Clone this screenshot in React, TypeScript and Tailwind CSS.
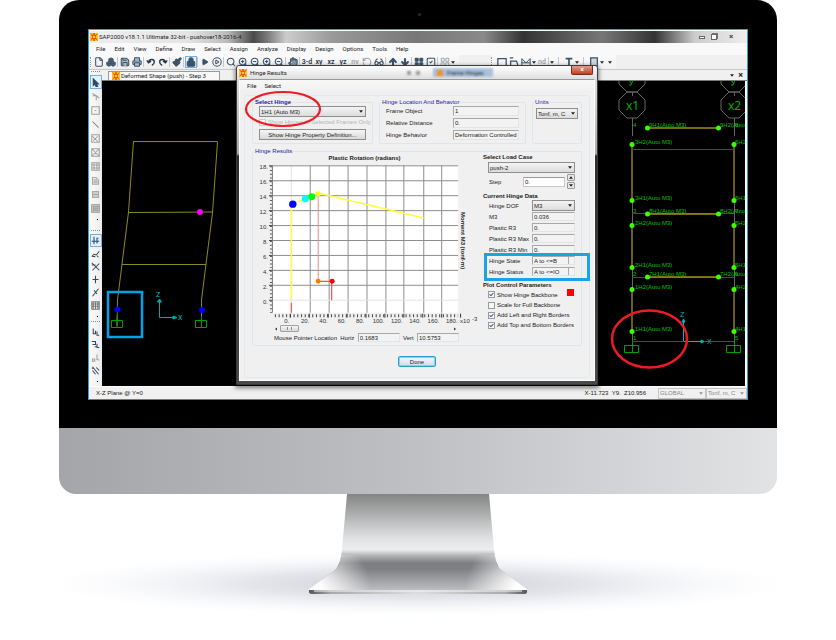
import type { ReactNode } from "react";
import clsx from "clsx";
import {
  ArrowDown,
  ArrowUp,
  Boxes,
  Check,
  CirclePlay,
  File,
  Glasses,
  Hand,
  LayoutGrid,
  Lock,
  Paintbrush,
  Play,
  Printer,
  RotateCcw,
  Save,
  Search,
  SquareCheck,
  ZoomIn,
  ZoomOut,
} from "lucide-react";

const MENUS = ["File", "Edit", "View", "Define", "Draw", "Select", "Assign", "Analyze", "Display", "Design", "Options", "Tools", "Help"];

const UI_FONT = "font-[Roboto,'Liberation_Sans',sans-serif]";
const DIALOG_FONT = "font-['Liberation_Sans',sans-serif]";

function Logo() {
  return (
    <svg viewBox="0 0 12 12" className="size-[8px] shrink-0">
      <rect width="12" height="12" fill="#ffc21a" />
      <path d="M0 0l5 4V0h2v4l5-4-4 6 4 6-5-4v4H5V8l-5 4 4-6z" fill="#e3341c" />
      <circle cx="6" cy="6" r="2" fill="#ffd21a" />
    </svg>
  );
}

function Caret() {
  return (
    <svg viewBox="0 0 6 4" className="h-[3px] w-[4px] shrink-0">
      <path d="M0 0h6L3 4z" fill="#222" />
    </svg>
  );
}

function Sep() {
  return <span className="h-[10px] w-[2px] shrink-0 border-l border-[#c4c8cc]" />;
}

function Tool({ label, active, children }: { label: string; active?: boolean; children: ReactNode }) {
  return (
    <button
      aria-label={label}
      className={clsx(
        "flex h-[12px] w-[12px] shrink-0 items-center justify-center text-[#3c5269] [&>svg]:size-[10px] [&>svg]:stroke-[2.5]",
        active && "border border-[#6db3ea] bg-[#e3f1fc]"
      )}
    >
      {children}
    </button>
  );
}

function TextTool({ children, dim }: { children: string; dim?: boolean }) {
  return (
    <button
      className={clsx(
        "w-[12px] shrink-0 text-center text-[7px] leading-[12px] font-medium",
        dim ? "text-[#9aa0a6]" : "text-[#223344]"
      )}
    >
      {children}
    </button>
  );
}

function Toolbar() {
  return (
    <div className="flex h-[14px] items-center overflow-hidden bg-[#f0f0f0]">
      <div className="flex h-full items-center bg-linear-to-b from-[#fafafa] to-[#eeeeee] pr-1">
        <span className="ml-px mr-[2px] h-[10px] border-l border-dotted border-[#999]" />
        <Tool label="New"><File /></Tool>
        <Tool label="Open"><Boxes fill="#5d7388" /></Tool>
        <Sep />
        <Tool label="Save"><Save fill="#a9b8c6" /></Tool>
        <Tool label="Print"><Printer fill="#a9b8c6" /></Tool>
        <Sep />
        <Tool label="Undo">
          <svg viewBox="0 0 12 12" fill="none" stroke="#26384a"><path d="M3 6c1-4 7-4 7 0 0 2-1 3-3 4M1 4l2 3 3-2" strokeWidth="1.6" /></svg>
        </Tool>
        <Tool label="Redo">
          <svg viewBox="0 0 12 12" fill="none" stroke="#26384a"><path d="M9 6c-1-4-7-4-7 0 0 2 1 3 3 4M11 4L9 7 6 5" strokeWidth="1.6" /></svg>
        </Tool>
        <Sep />
        <Tool label="Refresh"><Paintbrush fill="#3c5269" /></Tool>
        <Sep />
        <Tool label="Lock" active><Lock fill="#3c5269" /></Tool>
        <Sep />
        <Tool label="Run"><Play fill="#3c5269" className="scale-75" /></Tool>
        <Tool label="Animate"><CirclePlay /></Tool>
        <Sep />
        <Tool label="Rubber band zoom"><Search /></Tool>
        <Tool label="Full view"><ZoomIn /></Tool>
        <Tool label="Previous zoom"><ZoomOut /></Tool>
        <Tool label="Zoom in"><ZoomIn /></Tool>
        <Tool label="Zoom out"><ZoomOut /></Tool>
        <Sep />
        <Tool label="Pan"><Hand fill="#8796a5" /></Tool>
        <Sep />
        <TextTool>3-d</TextTool>
        <TextTool>xy</TextTool>
        <TextTool>xz</TextTool>
        <TextTool>yz</TextTool>
        <TextTool dim>nv</TextTool>
        <Tool label="Rotate"><RotateCcw color="#9aa0a6" /></Tool>
        <Tool label="Perspective"><Glasses /></Tool>
        <Sep />
        <Tool label="Up"><ArrowUp className="stroke-5!" /></Tool>
        <Tool label="Down"><ArrowDown className="stroke-5!" /></Tool>
        <Sep />
        <Tool label="Shrink"><LayoutGrid fill="#3c5269" /></Tool>
        <Tool label="Display options"><SquareCheck /></Tool>
        <Sep />
        <Tool label="Assign"><LayoutGrid color="#a5a9ad" /></Tool>
        <Caret />
      </div>
      <div className="ml-8 flex h-full items-center bg-linear-to-b from-[#fafafa] to-[#f2f2f2] pr-1">
        <span className="mr-1 h-[10px] border-l border-dotted border-[#999]" />
        <Tool label="Frame">
          <svg viewBox="0 0 12 12" fill="none" stroke="#3c5269"><path d="M1 11V2h10v9" strokeWidth="1.5" /></svg>
        </Tool>
        <Tool label="Deformed shape">
          <svg viewBox="0 0 12 12" fill="none" stroke="#3c5269"><path d="M1 1h4M2 11V5h7l2 6" strokeWidth="1.5" /></svg>
        </Tool>
        <Tool label="Forces">
          <svg viewBox="0 0 12 12" fill="none" stroke="#3c5269"><path d="M1 11V2l5 5 5-5v9M1 7h10" strokeWidth="1.2" /></svg>
        </Tool>
        <Caret />
        <TextTool dim>nd</TextTool>
        <Sep />
        <Caret />
        <span className="mx-1 h-[10px] border-l border-[#c4c8cc]" />
        <Tool label="Section">
          <svg viewBox="0 0 12 12" fill="none" stroke="#3c5269"><path d="M2 2h8M6 2v9M2 11h8" strokeWidth="2" /></svg>
        </Tool>
        <Caret />
        <span className="mx-1 h-[10px] border-l border-[#c4c8cc]" />
        <Tool label="Area">
          <svg viewBox="0 0 12 12" fill="#cdd8e2" stroke="#3c5269"><path d="M2 1h8v10H2z" strokeWidth="1.5" /></svg>
        </Tool>
        <Caret />
        <span className="w-1" />
        <Caret />
      </div>
    </div>
  );
}

const SIDE_TOOLS: { label: string; tone: string; d: string }[][] = [
  [
    { label: "Pointer", tone: "text-[#33475c]", d: "M3 1v9l2-2 2 4 2-1-2-3h3z" },
    { label: "Reshape", tone: "text-[#a0a0a0]", d: "M2 2l5 3v6M7 5l4 3M2 5h4" },
    { label: "Joint", tone: "text-[#a0a0a0]", d: "M1 1h10v10H1zM5 6h2" },
    { label: "Frame", tone: "text-[#777]", d: "M2 2l8 8" },
    { label: "Quick frame", tone: "text-[#a0a0a0]", d: "M1 1h10v10H1zM3 9l6-6M2 3l7 7" },
    { label: "Braces", tone: "text-[#a0a0a0]", d: "M1 1h10v10H1zM1 1l10 10M11 1L1 11" },
    { label: "Secondary beams", tone: "text-[#a0a0a0]", d: "M1 1h10v10H1zM4 1v10M8 1v10M1 4h10M1 8h10" },
    { label: "Poly area", tone: "text-[#a8a8a8]", d: "M2 2h5l3 4v5H2zM3 5h5M3 7h6M3 9h6" },
    { label: "Rectangular area", tone: "text-[#a8a8a8]", d: "M2 2h8v8H2zM2 4h8M2 6h8M2 8h8" },
    { label: "Quick area", tone: "text-[#909090]", d: "M1 1h10v10H1zM3 3h6v6H3zM5 5h2v2H5z" },
  ],
  [
    { label: "Snap points", tone: "text-[#33475c]", d: "M1 7h10M4 1v10M8 4v6M7 3h3" },
    { label: "Snap ends", tone: "text-[#33475c]", d: "M1 10l3-3 3 1 4-5M2 10h3v1M8 9l2 2" },
    { label: "Snap intersections", tone: "text-[#33475c]", d: "M1 1l10 10M11 2L2 11M1 4h5" },
    { label: "Snap perpendicular", tone: "text-[#33475c]", d: "M6 1v10M2 6h8" },
    { label: "Snap lines", tone: "text-[#33475c]", d: "M2 11l4-5M6 6l4-5M4 3l4 5" },
    { label: "Snap grid", tone: "text-[#777]", d: "M1 1h10v10H1zM3 1v10M6 1v10M9 1v10M1 4h10M1 7h10" },
  ],
  [
    { label: "Select all", tone: "text-[#33475c]", d: "M3 2v7h3V5M8 6v5h3" },
    { label: "Previous selection", tone: "text-[#33475c]", d: "M1 2h5v4H2M8 5v5h3M5 9h3" },
    { label: "Clear selection", tone: "text-[#a0a0a0]", d: "M2 8h3v3H2zM8 2v7h3" },
    { label: "Select by line", tone: "text-[#33475c]", d: "M2 1l8 10M2 6l4 5M7 2l4 4M1 3h2" },
  ],
];

function SideToolbar() {
  return (
    <div className="flex w-[13px] shrink-0 flex-col items-center bg-linear-to-r from-[#fbfbfb] to-[#ececec] pt-px">
      {SIDE_TOOLS.map((group, g) => (
        <div key={g} className={clsx("flex w-full flex-col items-center", g === 0 && "grow")}>
          <span className="mb-[3px] w-[9px] border-t border-dotted border-[#888]" />
          {group.map((tool, i) => (
            <button
              key={tool.label}
              aria-label={tool.label}
              className={clsx(
                "flex w-[12px] shrink-0 items-center justify-center",
                g === 0 ? "h-[14px]" : "h-[13px]",
                tool.tone,
                i === 0 && g < 2 && "border border-[#6db3ea] bg-[#e3f1fc]"
              )}
            >
              <svg viewBox="0 0 12 12" className="size-[9px] shrink-0" fill="none" stroke="currentColor" strokeWidth="1.4">
                <path d={tool.d} fill={tool.label === "Pointer" ? "currentColor" : "none"} />
              </svg>
            </button>
          ))}
          <span className="my-1 ml-1 size-px bg-black" />
        </div>
      ))}
    </div>
  );
}

function DeformedView() {
  return (
    <svg viewBox="102 81 134 305" className="h-[305px] w-[134px] shrink-0 font-[Roboto,sans-serif]">
      <g fill="none" stroke="#8a8a22">
        <path d="M133.500 141l-5 71-6.500 52-4.500 36-.5 26" />
        <path d="M217.500 142l-5 71-6.500 51-4.500 36v26" />
        <path d="M133 141.500h84.500M128.500 212.500l84-.5M122 264.500h84" />
      </g>
      <g fill="none" stroke="#00a000">
        <path d="M111.500 320.500h11v7h-11zM117 316v11M195.500 320.500h11v7h-11zM201.500 316v11" />
      </g>
      <circle cx="200" cy="212" r="3" fill="#ff00ff" />
      <circle cx="117.500" cy="309.500" r="3" fill="#0000ff" />
      <circle cx="202" cy="310" r="3" fill="#0000ff" />
      <g stroke="#00a8a8" fill="none">
        <path d="M159.500 300v17.500H175" />
        <path d="M157.500 302l2-3 2 3zM173 316l4 1.500-4 1.500z" fill="#00a8a8" />
      </g>
      <text x="156" y="297" fontSize="7" fill="#00c0c0">Z</text>
      <text x="178" y="320" fontSize="7" fill="#00c0c0">X</text>
      <rect x="108" y="292" width="34" height="45" fill="none" stroke="#00a2e8" strokeWidth="2.500" />
    </svg>
  );
}

const COLUMN_HINGES = [
  { y: 144, left: "3H2(Auto M3)", right: "6H2" },
  { y: 200, left: "3H1(Auto M3)", right: "6H1" },
  { y: 225, left: "2H2(Auto M3)", right: "5H2" },
  { y: 267, left: "2H1(Auto M3)", right: "5H1" },
  { y: 289, left: "1H2(Auto M3)", right: "4H2" },
  { y: 331, left: "1H1(Auto M3)", right: "4H1" },
];

const BEAM_HINGES = [
  { y: 128, name: "9", nodes: ["4", "8"] },
  { y: 214, name: "8", nodes: ["3", "7"] },
  { y: 277, name: "7", nodes: ["2", "6"] },
];

function HingeView() {
  return (
    <svg viewBox="597 81 148 305" className="h-[305px] w-[148px] shrink-0 font-['Liberation_Sans',sans-serif] text-[6px]">
      {[632, 734].map((x, i) => (
        <g key={x} fill="none" stroke="#666">
          <path d={`M${x - 5} 92h10l8 8v10l-8 8h-10l-8-8v-10z`} />
          <path d={`M${x - 13} 81v3l8 8h10l8-8v-3M${x + 0.5} 92v4M${x + 0.5} 118v18M${x + 0.5} 200v25M${x + 0.5} 267v22M${x + 0.5} 331v14`} />
          <path d={`M${x} 142v58M${x} 225v42M${x} 289v42`} stroke="#8a7d1c" strokeWidth="1.500" />
          <path d={`M${x - 7.5} 345.500h14v7h-14zM${x + 0.5} 341v12`} stroke="#00a000" />
          <path d={`M${x + 1} 80l-2 5h-2M${x - 3} 80l2 3`} stroke="#00b000" />
          <text x={x - 6} y="110" fontSize="12" fill="#00b000" stroke="none" className="font-['Noto_Sans',sans-serif]">
            {i === 0 ? "x1" : "x2"}
          </text>
        </g>
      ))}
      <path d="M632 149.500h102M632 213.500h102M632 277.500h102M632 341.500h102" stroke="#4a4a4a" />
      {BEAM_HINGES.map((b) => (
        <g key={b.name}>
          <path d={`M647 ${b.y}h71`} stroke="#a08f14" strokeWidth="1.500" />
          <circle cx="647.500" cy={b.y} r="2.500" fill="#3cff00" />
          <circle cx="718.500" cy={b.y} r="2.500" fill="#3cff00" />
          <g fill="#00c000">
            <text x="649" y={b.y - 1}>{b.name}H1(Auto M3)</text>
            <text x="720" y={b.y - 1}>{b.name}H2(Auto</text>
            <text x="633" y={b.y - 1}>{b.nodes[0]}</text>
            <text x="735" y={b.y - 1}>{b.nodes[1]}</text>
          </g>
        </g>
      ))}
      {COLUMN_HINGES.map((h) => (
        <g key={h.y}>
          <circle cx="632" cy={h.y + 0.5} r="2.500" fill="#3cff00" />
          <circle cx="734" cy={h.y + 0.5} r="2.500" fill="#3cff00" />
          <text x="635" y={h.y} fill="#00c000">{h.left}</text>
          <text x="735" y={h.y} fill="#00c000">{h.right}</text>
        </g>
      ))}
      <text x="633" y="340" fill="#00c000">1</text>
      <text x="735" y="340" fill="#00c000">5</text>
      <g stroke="#00b4c8" fill="none">
        <path d="M683.500 322v19M684 341.500h17" />
        <path d="M682 322l1.500-3 1.500 3zM701 340l3 1.500-3 1.500z" fill="#00b4c8" />
      </g>
      <text x="680" y="317" fontSize="7" fill="#00b4c8">Z</text>
      <text x="707" y="344" fontSize="7" fill="#00b4c8">X</text>
      <ellipse cx="649.500" cy="339" rx="37.500" ry="28.500" fill="none" stroke="#ed1c24" strokeWidth="2.500" />
    </svg>
  );
}

function Group({ title, className, bodyClass, children }: { title: string; className?: string; bodyClass?: string; children: ReactNode }) {
  return (
    <fieldset className={clsx("min-w-0 rounded-[2px] border border-[#dde6ea]", className)}>
      <legend className="ml-px px-px leading-[6px] text-[#1c1ca8]">{title}</legend>
      <div className={bodyClass}>{children}</div>
    </fieldset>
  );
}

function Select({ id, label, value, className }: { id?: string; label?: string; value: string; className?: string }) {
  return (
    <span className={clsx("relative flex", className)}>
      <select
        id={id}
        aria-label={label}
        className="h-[11px] w-full appearance-none border border-[#8e8e8e] bg-linear-to-b from-[#f4f4f4] to-[#dcdcdc] pl-px text-[#222]"
      >
        <option>{value}</option>
      </select>
      <span className="pointer-events-none absolute top-[4px] right-[3px] flex"><Caret /></span>
    </span>
  );
}

function Field({ id, label, value, className }: { id: string; label: string; value: string; className?: string }) {
  return (
    <>
      <label htmlFor={id}>{label}</label>
      <input
        id={id}
        readOnly
        defaultValue={value}
        className={clsx("min-w-0 border-t border-l border-[#a8a8a8] border-r-[#e4e4e4] border-b-[#e4e4e4] border-r border-b bg-[#f3f3f3] pl-px text-[#222]", className)}
      />
    </>
  );
}

function CheckRow({ id, label, checked, disabled }: { id: string; label: string; checked?: boolean; disabled?: boolean }) {
  return (
    <span className={clsx("flex h-[10px] items-center gap-[2px] whitespace-nowrap", disabled && "text-[#b4b4b4]")}>
      <span className="relative flex">
        <input
          id={id}
          type="checkbox"
          defaultChecked={checked}
          disabled={disabled}
          className="size-[7px] appearance-none border border-[#9a9a9a] bg-[#f6f6f6] disabled:border-[#ccc]"
        />
        {checked && <Check className="pointer-events-none absolute top-px left-px size-[5px] stroke-5 text-[#3b4a94]" />}
      </span>
      <label htmlFor={id}>{label}</label>
    </span>
  );
}

function HingeChart() {
  const yLabels = [18, 16, 14, 12, 10, 8, 6, 4, 2, 0];
  const xLabels = [0, 20, 40, 60, 80, 100, 120, 140, 160, 180];
  return (
    <svg viewBox="254 154 228 170" className="h-[170px] w-full text-[6px]" fill="#333">
      <text x="365" y="160" textAnchor="middle" fontWeight="bold" fill="#222">Plastic Rotation  (radians)</text>
      <rect x="272" y="165" width="187" height="148" fill="#fff" />
      <path d="M291.500 165v148" stroke="#e4e4e4" />
      <path
        d="M310.500 165v148M329.500 165v148M348.500 165v148M367.500 165v148M386.500 165v148M404.500 165v148M424.500 165v148M442.500 165v148M272 165.500h187M272 180.500h187M272 195.500h187M272 210.500h187M272 225.500h187M272 240.500h187M272 255.500h187M272 270.500h187M272 285.500h187"
        stroke="#8c8c8c"
        fill="none"
      />
      <path d="M272 300.500h187" stroke="#e4e4e4" />
      <path d="M272.500 165v148" stroke="#777" />
      <path d="M271 166v147" stroke="#555" strokeWidth="2" strokeDasharray="1 2.750" />
      <path d="M275 316h184" stroke="#444" strokeWidth="3" strokeDasharray="1 2.750" />
      {yLabels.map((n, i) => (
        <g key={n}>
          <text x="268" y={169 + i * 15} textAnchor="end">{n}.</text>
          <path d={`M269 ${165.5 + i * 15}h3`} stroke="#444" />
        </g>
      ))}
      {xLabels.map((n, i) => (
        <g key={n}>
          <text x={287 + i * 18.4} y="323" textAnchor="middle">{n}.</text>
          <path d={`M${290.5 + i * 19} 314v4`} stroke="#333" />
        </g>
      ))}
      <text x="461" y="323">x10</text>
      <text x="473" y="321">-3</text>
      <text transform="translate(462 212) rotate(90)" fontWeight="bold" fill="#222">Moment M3  (tonf·m)</text>
      <path d="M291.500 300v-96l28-11 105 25" fill="none" stroke="#ffff3c" strokeWidth="1.500" />
      <path d="M318.500 194v88" stroke="#f08a8a" />
      <path d="M318.500 281.500H332v19M291.500 303v10" stroke="#f05050" fill="none" strokeWidth="1.200" />
      <circle cx="291" cy="205" r="1.500" fill="#ff00ff" />
      <circle cx="293" cy="204" r="3.700" fill="#0000ff" />
      <circle cx="305.500" cy="198.500" r="3.500" fill="#00ffff" />
      <circle cx="312" cy="196.500" r="3.500" fill="#00ff00" />
      <circle cx="318.500" cy="193.500" r="2.500" fill="#ffff00" />
      <circle cx="318.500" cy="281.500" r="2.500" fill="#ff8000" />
      <circle cx="332.500" cy="281.500" r="2.500" fill="#ff0000" />
    </svg>
  );
}

function HingeResults() {
  return (
    <Group title="Hinge Results" bodyClass="flex justify-between pr-[6px] pb-[3px]">
      <div className="flex w-[228px] flex-col pl-px">
        <HingeChart />
        <div className="mr-[22px] ml-[18px] flex h-[9px] items-center justify-between px-[3px]">
          <span className="flex items-center gap-[3px]">
            <svg viewBox="0 0 4 6" className="h-[4px] w-[2px]"><path d="M4 0v6L0 3z" fill="#333" /></svg>
            <span className="flex h-[7px] w-[19px] items-center justify-center rounded-[1px] border border-[#a0a0a0] bg-linear-to-b from-[#f6f6f6] to-[#d8d8d8]">
              <span className="h-[3px] w-[5px] border-x border-[#888]" />
            </span>
          </span>
          <svg viewBox="0 0 4 6" className="h-[4px] w-[2px]"><path d="M0 0v6l4-3z" fill="#333" /></svg>
        </div>
        <div className="mr-[22px] ml-[20px] flex items-center justify-between">
          <span>Mouse Pointer Location</span>
          <Field id="horiz" label="Horiz" value="0.1683" className="h-[9px] w-[42px]" />
          <Field id="vert" label="Vert" value="10.5753" className="h-[9px] w-[42px]" />
        </div>
      </div>
      <div className="flex w-[92px] flex-col">
        <label htmlFor="load-case" className="leading-[6px] font-bold text-[#222]">Select Load Case</label>
        <Select id="load-case" value="push-2" className="mt-[2px] ml-[5px]" />
        <div className="ml-[6px] flex h-[17px] items-center">
          <label htmlFor="step" className="w-[34px]">Step</label>
          <input id="step" defaultValue="0." className="h-[10px] w-[42px] border border-[#c8c8c8] border-t-[#999] bg-white pl-px" />
          <span className="ml-[2px] flex flex-col gap-px">
            <button aria-label="Step up" className="flex h-[7px] w-[8px] rotate-180 items-center justify-center rounded-[1px] border border-[#999] bg-[#e8e8e8]"><Caret /></button>
            <button aria-label="Step down" className="flex h-[7px] w-[8px] items-center justify-center rounded-[1px] border border-[#999] bg-[#e8e8e8]"><Caret /></button>
          </span>
        </div>
        <h3 className="mt-[2px] font-bold text-[#222]">Current Hinge Data</h3>
        <div className="ml-[6px] grid grid-cols-[1fr_43px] items-center">
          <label htmlFor="dof">Hinge DOF</label>
          <Select id="dof" value="M3" />
          <Field id="m3" label="M3" value="0.036" className="my-px h-[9px]" />
          <Field id="r3" label="Plastic R3" value="0." className="my-px h-[9px]" />
          <Field id="r3max" label="Plastic R3 Max" value="0." className="my-px h-[9px]" />
          <Field id="r3min" label="Plastic R3 Min" value="0." className="my-px h-[9px]" />
          <Field id="state" label="Hinge State" value="A to <=B" className="my-px h-[9px] bg-[linear-gradient(90deg,transparent_35px,#aaa_35px,#aaa_36px,transparent_36px)]" />
          <Field id="status" label="Hinge Status" value="A to <=IO" className="my-px h-[9px] bg-[linear-gradient(90deg,transparent_35px,#aaa_35px,#aaa_36px,transparent_36px)]" />
        </div>
        <h3 className="mt-[4px] font-bold text-[#222]">Plot Control Parameters</h3>
        <div className="ml-[5px] flex flex-col">
          <div className="flex items-center justify-between pr-px">
            <CheckRow id="backbone" label="Show Hinge Backbone" checked />
            <button aria-label="Backbone colour" className="mb-1 size-[7px] bg-[#ff0000]" />
          </div>
          <CheckRow id="scale" label="Scale for Full Backbone" />
          <CheckRow id="lr" label="Add Left and Right Borders" checked />
          <CheckRow id="tb" label="Add Top and Bottom Borders" checked />
        </div>
      </div>
    </Group>
  );
}

function HingeDialog() {
  return (
    <section
      className={clsx(
        "absolute top-[35px] left-[147px] w-[362px] rounded-t-[3px] border border-[#3a3a3a] bg-[linear-gradient(180deg,#fff_0,#dcdcdc_14px,#a8a8a8_88px,#2c2c2c_90px,#4a4a4a_100%)] px-[2px] pb-[3px] shadow-[0_2px_4px_1px_rgba(0,0,0,0.5)]",
        DIALOG_FONT
      )}
    >
      <header className={clsx("relative flex h-[13px] items-center bg-linear-to-b from-white to-[#dedede] text-[6px] text-[#222]", UI_FONT)}>
        <Logo />
        <h2 className="ml-[3px]">Hinge Results</h2>
        <span className="ml-[120px] flex gap-[5px] blur-[1px]">
          <i className="size-[4px] bg-[#999]" />
          <i className="size-[4px] bg-[#999]" />
        </span>
        <span className="ml-[13px] flex h-[9px] w-[60px] items-center gap-1 bg-[#a9c1dc] pl-1 blur-[1px]">
          <i className="size-[6px] bg-[#f59120]" />
          Frame Hinges
        </span>
        <button
          aria-label="Close"
          className="absolute top-0 right-[2px] flex h-[9px] w-[22px] items-center justify-center rounded-b-[2px] border border-t-0 border-[#7d2a1e] bg-linear-to-b from-[#e59a8c] to-[#c23a20] text-[7px] font-bold text-white"
        >
          ×
        </button>
      </header>
      <div className="border border-t border-white border-t-[#999] bg-[#f0f0f0] text-[6px] leading-[8px] text-[#222]">
        <nav className={clsx("flex h-[12px] items-center gap-[8px] bg-linear-to-b from-[#f8f8f8] to-[#f0f0f0] pl-[7px]", UI_FONT)}>
          <button>File</button>
          <button>Select</button>
        </nav>
        <div className="mx-[4px] mt-[3px] mb-[2px] rounded-[3px] border border-[#e0eaee] px-[7px] pt-[3px] pb-[10px]">
          <div className="flex gap-[6px]">
            <Group title="Select Hinge" className="w-[121px] [&>legend]:font-bold" bodyClass="px-[6px] pt-px pb-[3px]">
              <Select label="Hinge" value="1H1 (Auto M3)" />
              <CheckRow id="only-selected" label="Show Hinges in Selected Frames Only" disabled />
              <button className="mt-[2px] h-[11px] w-full border border-[#8e8e8e] bg-linear-to-b from-[#f6f6f6] to-[#d9d9d9] leading-[8px] text-[#222]">
                Show Hinge Property Definition...
              </button>
            </Group>
            <Group title="Hinge Location And Behavior" className="w-[147px]" bodyClass="px-[6px] pt-px">
              <div className="grid grid-cols-[1fr_66px] items-center gap-y-[2px]">
                <Field id="frame" label="Frame Object" value="1" className="h-[10px]" />
                <Field id="distance" label="Relative Distance" value="0." className="h-[10px]" />
                <Field id="behavior" label="Hinge Behavior" value="Deformation Controlled" className="h-[10px]" />
              </div>
            </Group>
            <Group title="Units" className="flex-1" bodyClass="px-[3px] pt-[3px]">
              <Select label="Units" value="Tonf, m, C" />
            </Group>
          </div>
          <div className="mt-[4px]">
            <HingeResults />
          </div>
          <div className="mt-[10px] flex justify-center">
            <button className="h-[11px] w-[38px] rounded-[2px] border border-[#2c9cc4] bg-linear-to-b from-[#f6fafc] to-[#cfdfe8] leading-[8px] text-[#222] shadow-[inset_0_0_1px_1px_#7cd3f0]">
              Done
            </button>
          </div>
        </div>
      </div>
      <svg viewBox="0 0 78 38" className="pointer-events-none absolute top-[24px] left-[7px] h-[38px] w-[78px]">
        <ellipse cx="39" cy="19" rx="37" ry="17" fill="none" stroke="#ed1c24" strokeWidth="2.200" />
      </svg>
      <span className="pointer-events-none absolute top-[187px] left-[247px] h-[28px] w-[106px] border-[3px] border-[#1aa4e8]" />
    </section>
  );
}

function SapWindow() {
  return (
    <div className={clsx("relative border-x border-t border-[#3d9ad8] bg-[#f0f0f0] text-[6px] leading-[8px] text-[#222]", UI_FONT)}>
      <header className="flex h-[13px] items-center border-t border-white bg-[linear-gradient(90deg,#eee_0,#e4e4e4_15%,#bbb_21%,#4a4a4a_25%,#777_27%,#ccc_30%,#999_37%,#777_50%,#8a8a8a_60%,#333_66%,#555_72%,#777_78%,#333_86%,#ccc_92%,#eee_100%)] px-px">
        <Logo />
        <h1 className="ml-px grow">SAP2000 v18.1.1 Ultimate 32-bit - pushover18-2016-4</h1>
        <span className="mr-[4px] flex items-center text-[#444]">
          <button aria-label="Minimize" className="flex w-[12px] justify-center"><i className="h-[3px] w-[6px] border border-[#666] bg-white" /></button>
          <button aria-label="Restore" className="flex w-[12px] justify-center"><i className="size-[6px] border border-[#666] bg-white shadow-[1px_-1px_0_#777]" /></button>
          <button aria-label="Close window" className="w-[22px] text-center text-[8px] font-bold">×</button>
        </span>
      </header>
      <nav className="flex h-[12px] items-center gap-[9px] bg-[#f9f9f9] pl-[7px]">
        {MENUS.map((m) => (
          <button key={m}>{m}</button>
        ))}
      </nav>
      <Toolbar />
      <div className="flex border-t border-[#c8c8c8]">
        <SideToolbar />
        <div className="flex min-w-0 grow flex-col">
          <div className="flex h-[11px] items-end justify-between border-b border-[#777] bg-[#f0f0f0] pl-[6px]">
            <span className="flex h-[9px] w-[112px] items-center gap-px border border-b-0 border-[#999] bg-[#f8f8f8] pl-[3px]">
              <Logo />
              Deformed Shape (push) - Step 3
            </span>
            <span className="flex h-full items-center gap-[4px] pr-[4px]">
              <Caret />
              <button aria-label="Close view" className="text-[9px] font-bold">×</button>
            </span>
          </div>
          <div className="flex justify-between border-r-2 border-white bg-black">
            <DeformedView />
            <HingeView />
          </div>
        </div>
      </div>
      <footer className={clsx("flex h-[14px] items-center border-t border-[#fff] border-b border-b-[#777] bg-[#f0f0f0] pl-[7px]", DIALOG_FONT)}>
        <span className="grow">X-Z Plane @ Y=0</span>
        <span className="mr-[12px] whitespace-pre">X-11.723  Y9.  Z10.956</span>
        <Select label="Coordinate system" value="GLOBAL" className="w-[48px] [&>select]:border-[#c4c4c4] [&>select]:bg-none [&>select]:text-[#888] [&_path]:fill-[#999]" />
        <Select label="Display units" value="Tonf, m, C" className="w-[41px] [&>select]:border-[#c4c4c4] [&>select]:bg-none [&>select]:text-[#888] [&_path]:fill-[#999]" />
      </footer>
      <HingeDialog />
    </div>
  );
}

function Stand() {
  return (
    <svg viewBox="59 494 718 146" className="w-full overflow-visible">
      <defs>
        <linearGradient id="neck" x1="0" y1="494" x2="0" y2="590" gradientUnits="userSpaceOnUse">
          <stop offset="0" stopColor="#838584" />
          <stop offset=".16" stopColor="#a3a5a4" />
          <stop offset=".34" stopColor="#c8c9cb" />
          <stop offset=".46" stopColor="#e0e1e3" />
          <stop offset=".58" stopColor="#eeeeee" />
          <stop offset=".64" stopColor="#b4b5b7" />
          <stop offset=".72" stopColor="#7d7e82" />
          <stop offset=".78" stopColor="#7f8084" />
          <stop offset="1" stopColor="#bcbdc0" />
        </linearGradient>
        <radialGradient id="foot-left" cx="309" cy="592" r="62" gradientUnits="userSpaceOnUse">
          <stop offset=".2" stopColor="#fff" />
          <stop offset="1" stopColor="#fff" stopOpacity="0" />
        </radialGradient>
        <radialGradient id="foot-right" cx="527" cy="592" r="62" gradientUnits="userSpaceOnUse">
          <stop offset=".2" stopColor="#fff" />
          <stop offset="1" stopColor="#fff" stopOpacity="0" />
        </radialGradient>
        <linearGradient id="lip">
          <stop offset="0" stopColor="#555" />
          <stop offset=".1" stopColor="#aaa" />
          <stop offset=".5" stopColor="#ddd" />
          <stop offset=".9" stopColor="#aaa" />
          <stop offset="1" stopColor="#555" />
        </linearGradient>
        <radialGradient id="floor">
          <stop offset="0" stopColor="#c9ccd4" />
          <stop offset=".45" stopColor="#dfe1e8" stopOpacity=".85" />
          <stop offset="1" stopColor="#f4f6fb" stopOpacity="0" />
        </radialGradient>
      </defs>
      <ellipse cx="418" cy="584" rx="375" ry="32" fill="url(#floor)" />
      <path d="M347 494h142l5 55c1 10 3 17 7 21l26 19v2H309v-2l26-19c4-4 6-11 7-21z" fill="url(#neck)" />
      <path d="M341 555l-2 10-4 5-26 19v2h109v-36z" fill="url(#foot-left)" />
      <path d="M495 555l2 10 4 5 26 19v2H418v-36z" fill="url(#foot-right)" />
      <path d="M309 590h218v2c0 1-1 2-3 2H312c-2 0-3-1-3-2z" fill="url(#lip)" />
      <path d="M314 591h208" stroke="#f4f4f4" />
    </svg>
  );
}

export default function App() {
  return (
    <main className="mx-auto w-full max-w-[718px] overflow-x-clip bg-white [overflow-clip-margin:60px]">
      <div className="relative rounded-t-[20px] bg-black px-[29px] pt-[29px] pb-[28px]">
        <span className="absolute top-[13px] left-1/2 size-[3px] rounded-full bg-[#2a2a2a]" />
        <SapWindow />
      </div>
      <div className="h-[66px] rounded-b-[17px] bg-linear-to-r from-[#a4a5a9] via-[#bfc0c4] to-[#e2e3e5]" />
      <Stand />
    </main>
  );
}
